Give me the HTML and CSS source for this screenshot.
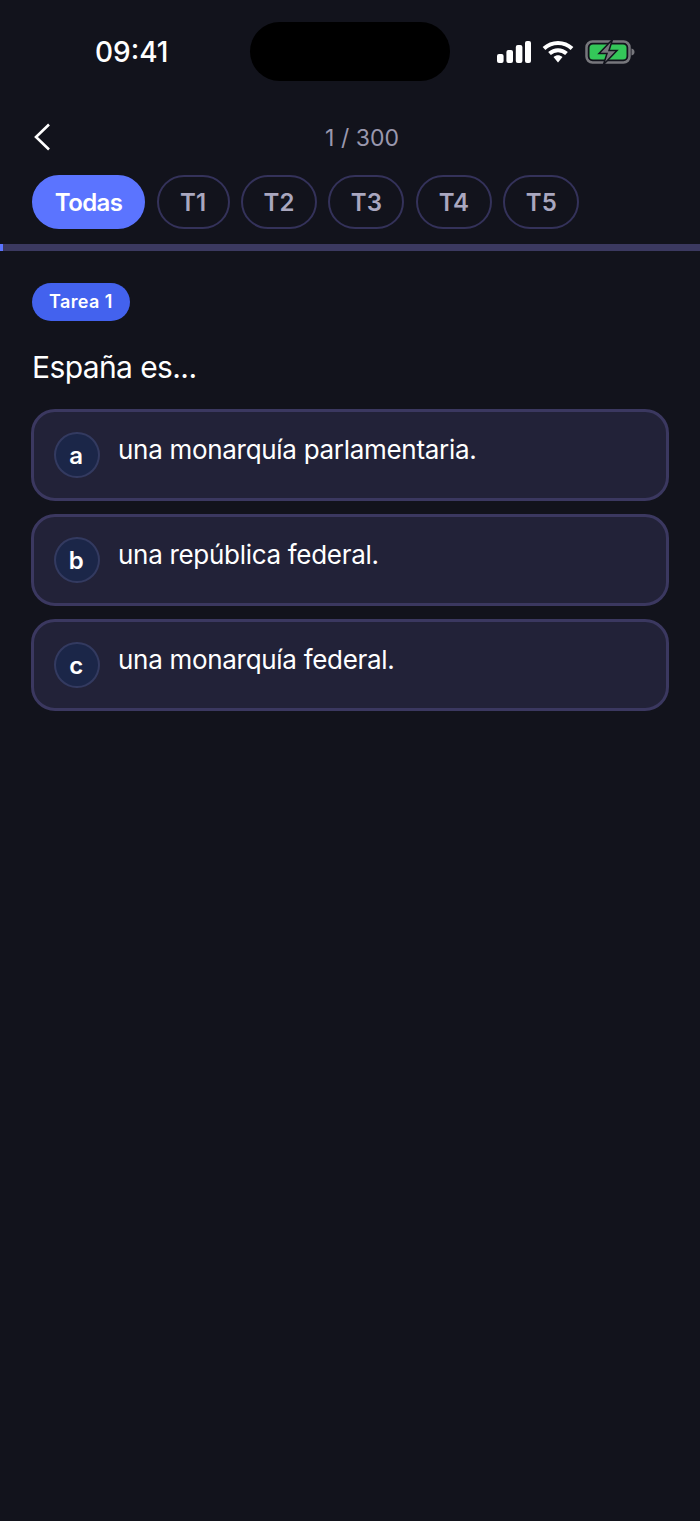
FILE: index.html

```html
<!DOCTYPE html>
<html lang="es">
<head>
    <meta charset="UTF-8">
    <title>Test</title>
    <link rel="stylesheet" href="styles.css">
</head>
<body>
<div class="status-bar">
    <span class="time">09:41</span>
    <div class="island"></div>
    <div class="status-icons">
        <svg width="36" height="22" viewBox="0 0 36 22">
            <rect x="2" y="13" width="6.600" height="9" rx="2" fill="#fff"/>
            <rect x="11.400" y="9" width="6.600" height="13" rx="2" fill="#fff"/>
            <rect x="20.800" y="4" width="6.600" height="18" rx="2" fill="#fff"/>
            <rect x="30" y="0" width="6" height="22" rx="2" fill="#fff"/>
        </svg>
        <svg width="32" height="24" viewBox="0 0 32 24">
            <path d="M2 8.500C10 1 22 1 30 8.500" fill="none" stroke="#fff" stroke-width="4"/>
            <path d="M7.500 13.500C12.500 9 19.500 9 24.500 13.500" fill="none" stroke="#fff" stroke-width="4"/>
            <path d="M11.500 17C14.500 14.600 17.500 14.600 20.500 17L16 22.500Z" fill="#fff"/>
        </svg>
        <svg width="50" height="26" viewBox="0 0 50 26">
            <rect x="1.500" y="2.500" width="43" height="21" rx="6" fill="none" stroke="#77777c" stroke-width="2.500"/>
            <rect x="4.500" y="5.500" width="37" height="15" rx="3.500" fill="#34c759"/>
            <path d="M46.500 9.500c2 .5 3 1.800 3 3.500s-1 3-3 3.500Z" fill="#77777c"/>
            <path d="M27.500 0.500L14 14.500H22L18.500 25.500L32 11.500H24Z" fill="#77777c" stroke="#12131c" stroke-width="1.500"/>
        </svg>
    </div>
</div>

<div class="top-nav">
    <svg class="back" width="18" height="28" viewBox="0 0 18 28">
        <path d="M16 1.500L3 14L16 26.500" fill="none" stroke="#fff" stroke-width="2.600"/>
    </svg>
    <span class="counter">1 / 300</span>
</div>

<div class="tabs">
    <div class="tab active">Todas</div>
    <div class="tab">T1</div>
    <div class="tab">T2</div>
    <div class="tab">T3</div>
    <div class="tab">T4</div>
    <div class="tab">T5</div>
</div>

<div class="progress"><div class="progress-fill"></div></div>

<div class="content">
    <span class="tag">Tarea 1</span>
    <div class="question">España es...</div>

    <div class="options">
        <div class="option">
            <div class="letter">a</div>
            <div class="option-text">una monarquía parlamentaria.</div>
        </div>
        <div class="option">
            <div class="letter">b</div>
            <div class="option-text">una república federal.</div>
        </div>
        <div class="option">
            <div class="letter">c</div>
            <div class="option-text">una monarquía federal.</div>
        </div>
    </div>
</div>
</body>
</html>
```

FILE: styles.css

```css
* {
    box-sizing: border-box;
}
body {
    margin: 0;
    height: 1521px;
    overflow: hidden;
    background-color: #12131c;
    color: #fff;
    font-family: Inter, "Noto Sans", sans-serif;
}
.status-bar {
    position: relative;
    height: 104px;
    display: flex;
    justify-content: space-between;
    align-items: center;
    padding: 0 65px 0 95px;
}
.time {
    font-size: 28px;
    font-weight: 500;
    line-height: 32px;
}
.island {
    position: absolute;
    left: 250px;
    top: 22px;
    width: 200px;
    height: 59px;
    border-radius: 30px;
    background-color: #000;
}
.status-icons {
    display: flex;
    align-items: center;
    gap: 11px;
}
.top-nav {
    display: flex;
    align-items: center;
    justify-content: center;
    position: relative;
    height: 66px;
    padding-left: 23px;
}
.back {
    position: absolute;
    left: 33px;
    top: 19px;
}
.counter {
    padding: 1px 0 0 1px;
    font-size: 23px;
    color: #9a98ae;
}
.tabs {
    display: flex;
    gap: 11.45px;
    padding: 0 32px;
    margin-top: 5px;
}
.tab {
    width: 76px;
    height: 54px;
    display: flex;
    align-items: center;
    justify-content: center;
    border: 2px solid #34325a;
    border-radius: 27px;
    font-size: 24px;
    font-weight: 600;
    color: #a9a7bf;
}
.tab:nth-child(2) {
    width: 73px;
}
.tab.active {
    width: 113.1px;
    background-color: #5b74ff;
    border-color: #5b74ff;
    color: #fff;
    letter-spacing: -0.6px;
}
.progress {
    height: 7px;
    margin-top: 15px;
    background-color: #3b3960;
}
.progress-fill {
    width: 3px;
    height: 100%;
    background-color: #5b74ff;
}
.content {
    padding: 32px 31px 0;
}
.tag {
    display: inline-block;
    margin-left: 1px;
    padding: 0 17px;
    height: 38px;
    line-height: 38px;
    border-radius: 19px;
    background-color: #4362ee;
    font-size: 18px;
    font-weight: 600;
    letter-spacing: 0.4px;
}
.question {
    margin: 26px 0 0 1px;
    font-size: 30px;
    letter-spacing: -0.6px;
    line-height: 40px;
}
.options {
    display: flex;
    flex-direction: column;
    gap: 13px;
    margin-top: 22px;
}
.option {
    display: flex;
    gap: 18.5px;
    height: 92px;
    padding: 20px 20px 0;
    background-color: #222238;
    border: 3px solid #3b3860;
    border-radius: 24px;
}
.letter {
    width: 45.5px;
    height: 46px;
    flex: none;
    display: flex;
    align-items: center;
    justify-content: center;
    padding-right: 1px;
    background-color: #1b2648;
    border: 2px solid #333a60;
    border-radius: 50%;
    font-size: 24px;
    font-weight: 600;
}
.option-text {
    padding-top: 1px;
    font-size: 26px;
    letter-spacing: -0.3px;
    line-height: 34px;
}
```
